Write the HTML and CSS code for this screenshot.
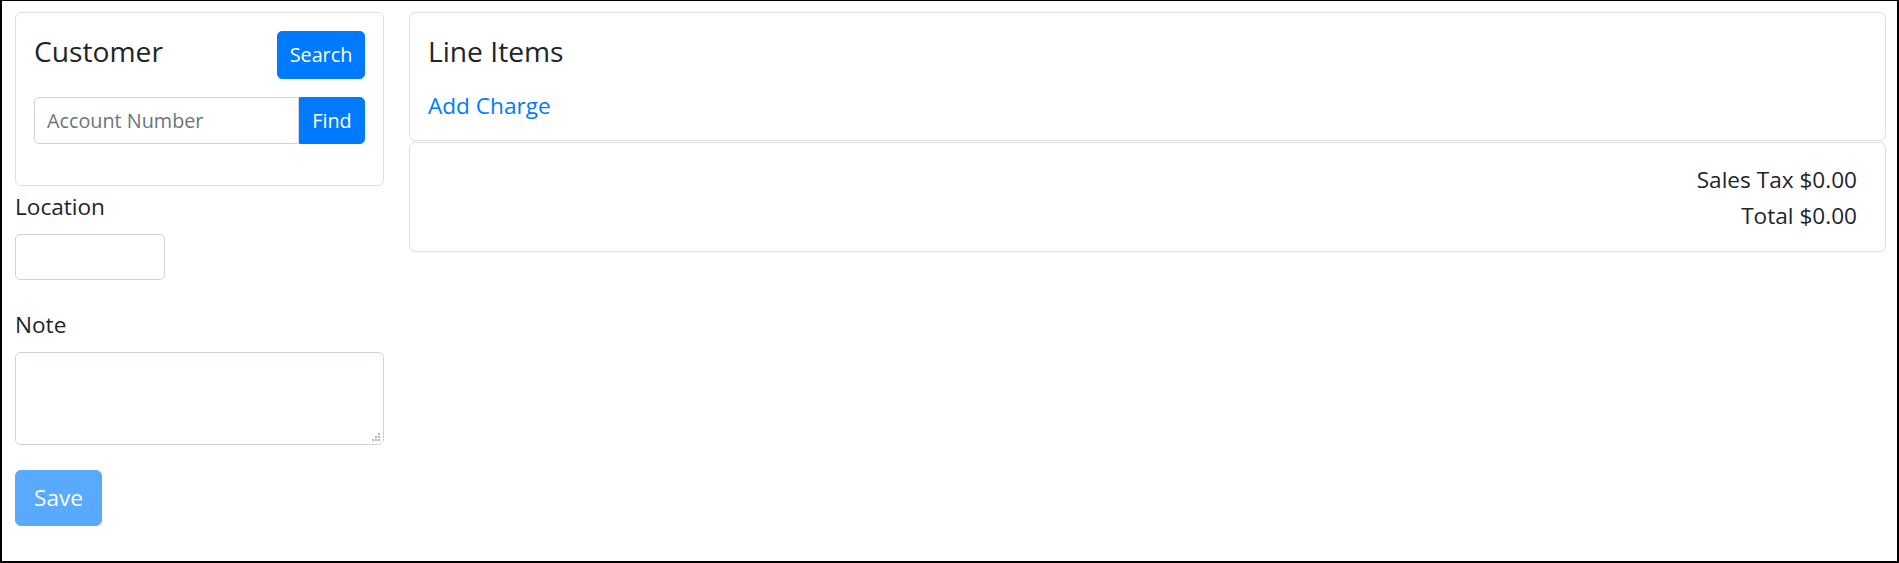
FILE: index.html
```html
<!DOCTYPE html>
<html lang="en">
<head>
<meta charset="utf-8">
<title>Order</title>
<link rel="stylesheet" href="styles.css">
</head>
<body>
<div class="page">
  <aside class="sidebar">
    <section class="card customer">
      <div class="card-head">
        <h5 class="card-title">Customer</h5>
        <button class="btn btn-primary btn-sm btn-search" type="button">Search</button>
      </div>
      <div class="input-group">
        <input class="form-control input-sm" type="text" placeholder="Account Number">
        <button class="btn btn-primary btn-sm btn-append" type="button">Find</button>
      </div>
    </section>
    <div class="form-group">
      <label class="label" for="location">Location</label>
      <input id="location" class="form-control location" type="text">
    </div>
    <div class="form-group">
      <label class="label" for="note">Note</label>
      <div class="note-wrap">
        <textarea id="note" class="form-control note"></textarea>
        <svg class="grip" width="9" height="9" viewBox="0 0 9 9" aria-hidden="true">
          <rect x="6" y="0" width="2" height="2" fill="#b5b5b5"/>
          <rect x="3" y="3" width="2" height="2" fill="#b5b5b5"/>
          <rect x="6" y="3" width="2" height="2" fill="#b5b5b5"/>
          <rect x="0" y="6" width="2" height="2" fill="#b5b5b5"/>
          <rect x="3" y="6" width="2" height="2" fill="#b5b5b5"/>
          <rect x="6" y="6" width="2" height="2" fill="#b5b5b5"/>
        </svg>
      </div>
    </div>
    <button class="btn btn-save" type="button" disabled>Save</button>
  </aside>
  <main class="content">
    <section class="card items">
      <h5 class="card-title items-title">Line Items</h5>
      <a class="link" href="#">Add Charge</a>
    </section>
    <section class="card totals">
      <div class="total-row">Sales Tax $0.00</div>
      <div class="total-row">Total $0.00</div>
    </section>
  </main>
</div>
</body>
</html>
```
FILE: styles.css
```css
* { box-sizing: border-box; }
html, body { height: 100%; }
body {
  margin: 0;
  border-style: solid;
  border-color: #000;
  border-width: 1px 2px 2px 2px;
  font-family: "Open Sans", "Noto Sans", sans-serif;
  font-size: 22.6px;
  line-height: 36px;
  color: #212529;
  background: #fff;
}
.page {
  display: flex;
  gap: 25px;
  padding: 11px 11px 0 13px;
  align-items: flex-start;
}
.sidebar {
  width: 369px;
  flex: none;
  display: flex;
  flex-direction: column;
  align-items: flex-start;
}
.content { flex: 1; min-width: 0; }
.card {
  border: 1px solid #dfdfdf;
  border-radius: 6px;
  background: #fff;
}
.customer { width: 100%; padding: 18px 18px 41px; }
.card-head {
  display: flex;
  justify-content: space-between;
  align-items: flex-start;
  margin-bottom: 18px;
}
.card-title {
  margin: 0;
  font-size: 28.2px;
  font-weight: 400;
  line-height: 36px;
  padding-top: 2px;
}
.btn {
  font-family: inherit;
  border: 1.5px solid transparent;
  color: #fff;
  cursor: pointer;
}
.btn-primary { background: #007bff; border-color: #007bff; }
.btn-sm {
  height: 48px;
  padding: 0 12px;
  font-size: 19.8px;
  line-height: 1;
  border-radius: 5px;
}
.btn-search { width: 88px; padding: 0; }
.input-group { display: flex; height: 47px; }
.form-control {
  border: 1.5px solid #ced4da;
  font-family: inherit;
  color: #495057;
  background: #fff;
}
.form-control::placeholder { color: #6c757d; opacity: 1; }
.input-sm {
  flex: 1;
  min-width: 0;
  height: 47px;
  padding: 0 12px;
  font-size: 19.8px;
  border-radius: 5px 0 0 5px;
}
.btn-append { height: 47px; width: 66px; padding: 0; border-radius: 0 5px 5px 0; }
.form-group { width: 100%; margin-bottom: 24px; }
.label { display: block; padding-top: 3px; margin-bottom: 9px; }
.location { display: block; width: 150px; height: 46px; border-radius: 5px; }
.note-wrap { position: relative; }
.note {
  display: block;
  width: 100%;
  height: 93px;
  border-radius: 6px;
  resize: none;
}
.grip { position: absolute; right: 3px; bottom: 3px; }
.btn-save {
  margin-top: 1px;
  width: 87px;
  height: 56px;
  padding: 0;
  font-size: 22.6px;
  line-height: 1;
  border-radius: 6px;
  background: #59a9ff;
  border-color: #59a9ff;
}
.items { padding: 18px 18px 16px; }
.items-title { margin-bottom: 17px; }
.link {
  display: block;
  padding-top: 2px;
  color: #007bff;
  text-decoration: none;
  width: max-content;
}
.totals {
  margin-top: 1px;
  padding: 19px 28px 17px 18px;
  text-align: right;
}
```
